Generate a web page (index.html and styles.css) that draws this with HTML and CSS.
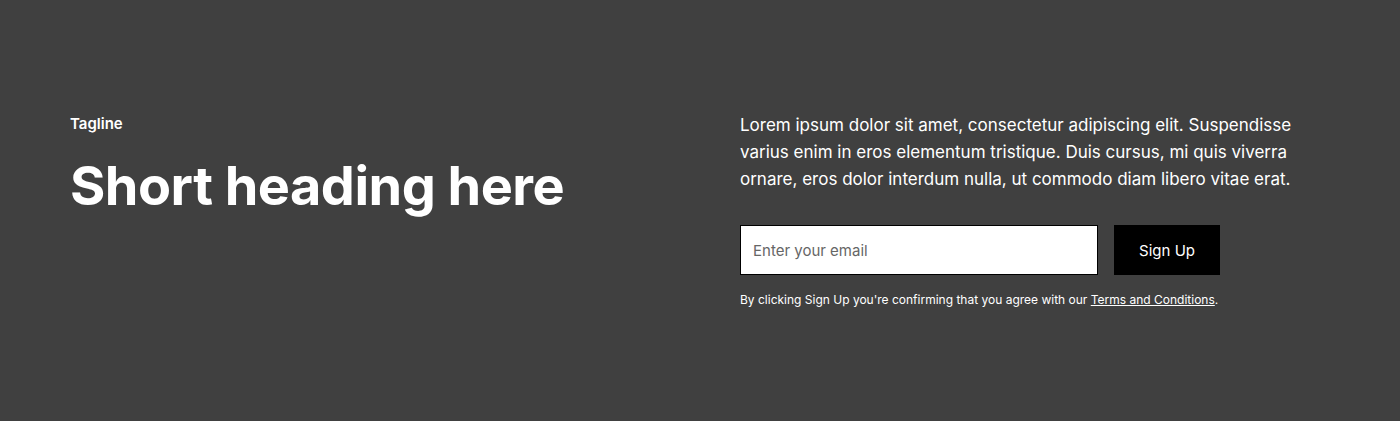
FILE: index.html
```html
<!DOCTYPE html>
<html lang="en">
<head>
<meta charset="utf-8">
<title>Newsletter</title>
<link rel="stylesheet" href="styles.css">
</head>
<body>
<section class="section">
  <div class="grid">
    <div class="intro">
      <p class="tagline">Tagline</p>
      <h1 class="heading">Short heading here</h1>
    </div>
    <div class="content">
      <p class="text">Lorem ipsum dolor sit amet, consectetur adipiscing elit. Suspendisse varius enim in eros elementum tristique. Duis cursus, mi quis viverra ornare, eros dolor interdum nulla, ut commodo diam libero vitae erat.</p>
      <form class="form">
        <input class="input" type="email" placeholder="Enter your email">
        <button class="button" type="button">Sign Up</button>
      </form>
      <p class="terms">By clicking Sign Up you're confirming that you agree with our <a class="link" href="#">Terms and Conditions</a>.</p>
    </div>
  </div>
</section>
</body>
</html>
```

FILE: styles.css
```css
* { box-sizing: border-box; }
html, body { margin: 0; padding: 0; }
body {
  background: #404040;
  color: #ffffff;
  font-family: Inter, "Noto Sans", sans-serif;
  height: 421px;
  overflow: hidden;
}
.section {
  padding: 112px 70px;
}
.grid {
  display: grid;
  grid-template-columns: 1fr 1fr;
  column-gap: 80px;
}
.tagline {
  margin: 0 0 16px;
  font-size: 15px;
  line-height: 24px;
  font-weight: 600;
}
.heading {
  margin: 0;
  font-size: 54px;
  line-height: 1.25;
  font-weight: 700;
  letter-spacing: -0.5px;
}
.text {
  margin: 0;
  font-size: 17px;
  line-height: 27px;
}
.form {
  margin: 32px 0 0;
  display: grid;
  grid-template-columns: 1fr max-content;
  column-gap: 16px;
  max-width: 480px;
}
.input {
  height: 50px;
  border: 1px solid #000;
  background: #fff;
  padding: 0 12px;
  font: inherit;
  font-size: 15px;
  color: #000;
  outline: none;
  border-radius: 0;
}
.input::placeholder { color: #666; }
.button {
  height: 50px;
  border: 1px solid #000;
  background: #000;
  color: #fff;
  padding: 0 24px;
  font: inherit;
  font-size: 15px;
  cursor: pointer;
}
.terms {
  margin: 16px 0 0;
  font-size: 12px;
  line-height: 18px;
}
.link { color: #fff; text-decoration: underline; }
```
